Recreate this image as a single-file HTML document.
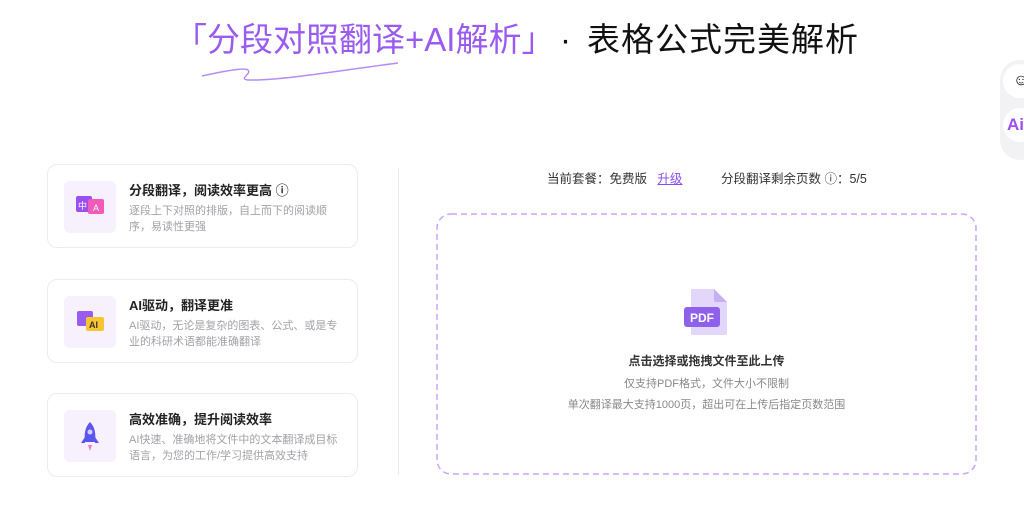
<!DOCTYPE html>
<html><head><meta charset="utf-8"><style>
body{margin:0;width:1024px;height:509px;background:#fff;position:relative;overflow:hidden;font-family:"Liberation Sans","Noto Sans CJK SC",sans-serif;}
.t{position:absolute;top:18px;font-size:33px;line-height:44px;white-space:nowrap;}
.card{position:absolute;left:47px;width:311px;height:84px;border:1px solid #ececf0;border-radius:10px;box-sizing:border-box;}
.ib{position:absolute;left:16px;top:16px;width:52px;height:52px;border-radius:6px;background:#f7f0fd;}
.ct{position:absolute;left:81px;top:15px;font-size:13px;font-weight:bold;color:#222;white-space:nowrap;}
.cd{position:absolute;left:81px;top:38px;width:215px;font-size:11px;line-height:16px;color:#a2a2a8;}
.s{position:absolute;font-size:12px;color:#333;white-space:nowrap;}
</style></head><body>
<div class="t" style="left:174px;color:#9a5bf0;letter-spacing:0px">「分段对照翻译+AI解析」</div>
<div class="t" style="left:560px;color:#111;">·</div>
<div class="t" style="left:587px;color:#111;font-size:33px;letter-spacing:1px">表格公式完美解析</div>
<svg style="position:absolute;left:190px;top:55px" width="250" height="30"><path d="M12 21 C30 17 55 12 58 15 C62 19 48 24 58 25 C90 26 160 14 208 8" fill="none" stroke="#b68cf5" stroke-width="1.5"/></svg>
<div style="position:absolute;left:1000px;top:60px;width:40px;height:100px;background:#f2f2f4;border-radius:20px"></div>
<div style="position:absolute;left:1003px;top:64px;width:34px;height:34px;background:#fff;border-radius:17px;font-size:16px;line-height:34px;text-indent:10px">☺</div>
<div style="position:absolute;left:1003px;top:108px;width:34px;height:34px;background:#fff;border-radius:17px;font-size:17px;font-weight:bold;line-height:34px;text-indent:4px;color:#a04ef0">Ai</div>

<div class="card" style="top:164px"><div class="ib"><svg width="52" height="52"><rect x="12" y="15" width="16" height="16" rx="2" fill="#9a50f0"/><rect x="24" y="18" width="16" height="15" rx="2" fill="#f05ab8"/><text x="14" y="28" font-size="9" fill="#fff" font-family="Noto Sans CJK SC">中</text><text x="29" y="30" font-size="9" fill="#fff">A</text></svg></div><div class="ct">分段翻译，阅读效率更高 ⓘ</div><div class="cd">逐段上下对照的排版，自上而下的阅读顺序，易读性更强</div></div>
<div class="card" style="top:279px"><div class="ib"><svg width="52" height="52"><rect x="13" y="15" width="16" height="15" rx="2" fill="#9a5cf0"/><rect x="22" y="21" width="18" height="14" rx="2" fill="#f7c530"/><text x="25" y="32" font-size="9" font-weight="bold" fill="#333">AI</text></svg></div><div class="ct">AI驱动，翻译更准</div><div class="cd">AI驱动，无论是复杂的图表、公式、或是专业的科研术语都能准确翻译</div></div>
<div class="card" style="top:393px"><div class="ib"><svg width="52" height="52"><path d="M26 12 C31 17 32 24 31 32 L21 32 C20 24 21 17 26 12Z" fill="#5b57ee"/><path d="M21 27 L17 33 L21 33Z M31 27 L35 33 L31 33Z" fill="#5b57ee"/><circle cx="26" cy="22" r="2.5" fill="#e0c8fb"/><path d="M24 35 L28 35 L26 41Z" fill="#f07ac8"/></svg></div><div class="ct">高效准确，提升阅读效率</div><div class="cd">AI快速、准确地将文件中的文本翻译成目标语言，为您的工作/学习提供高效支持</div></div>

<div style="position:absolute;left:398px;top:168px;width:1px;height:307px;background:#ececf0"></div>
<div class="s" style="left:547px;top:168px;font-size:12.5px">当前套餐：免费版 &nbsp; <span style="color:#8a4cf0;text-decoration:underline">升级</span></div>
<div class="s" style="left:721px;top:168px;font-size:12.5px">分段翻译剩余页数 ⓘ：5/5</div>
<svg style="position:absolute;left:436px;top:213px" width="541" height="262"><rect x="1" y="1" width="539" height="260" rx="14" fill="none" stroke="#caa5f6" stroke-width="1.5" stroke-dasharray="6 4"/></svg>
<svg style="position:absolute;left:683px;top:287px" width="48" height="50"><path d="M8 2 L31 2 L44 15 L44 46 Q44 48 42 48 L10 48 Q8 48 8 46Z" fill="#e2d6fb"/><path d="M31 2 L31 13 Q31 15 33 15 L44 15Z" fill="#c4b0f5"/><rect x="1" y="20" width="36" height="20" rx="3" fill="#8f60ec"/><text x="7" y="35" font-size="12" font-weight="bold" fill="#fff">PDF</text></svg>
<div class="s" style="left:437px;width:539px;text-align:center;top:352px;font-weight:bold;font-size:12px">点击选择或拖拽文件至此上传</div>
<div class="s" style="left:437px;width:539px;text-align:center;top:375px;color:#888;font-size:11px">仅支持PDF格式，文件大小不限制</div>
<div class="s" style="left:437px;width:539px;text-align:center;top:396px;color:#888;font-size:11px">单次翻译最大支持1000页，超出可在上传后指定页数范围</div>
</body></html>
